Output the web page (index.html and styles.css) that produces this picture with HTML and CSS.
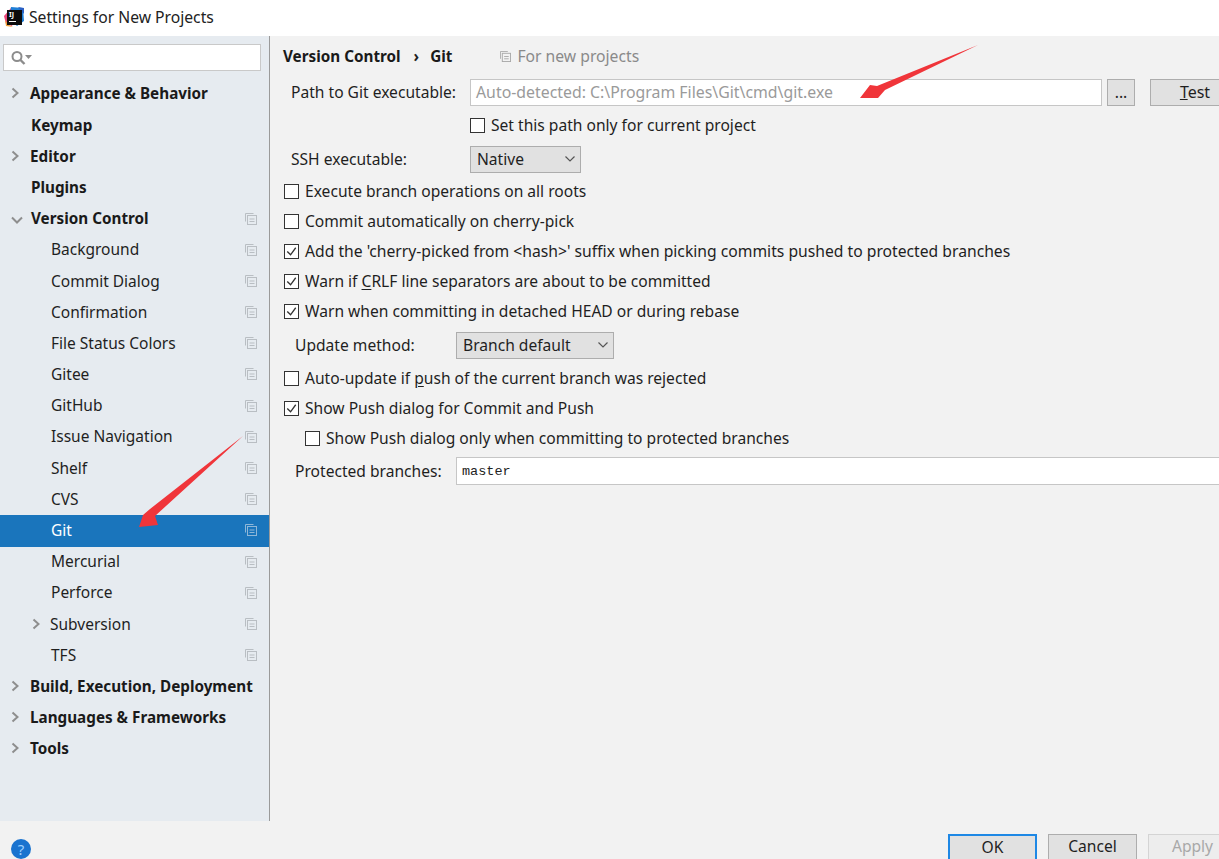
FILE: index.html
```html
<!DOCTYPE html>
<html lang="en">
<head>
<meta charset="utf-8">
<title>Settings for New Projects</title>
<link rel="stylesheet" href="styles.css">
</head>
<body>
<svg class="defs" width="0" height="0">
  <symbol id="copy" viewBox="0 0 12 12"><path d="M0.500 8.500V0.500H8.500" fill="none" stroke="currentColor"/><rect x="2.500" y="2.500" width="9" height="9" fill="none" stroke="currentColor"/><path d="M4.500 6h5M4.500 8.500h5" stroke="currentColor"/></symbol>
  <symbol id="right" viewBox="0 0 10 12"><path d="M2.500 1.500L7.500 6L2.500 10.500" fill="none" stroke="currentColor" stroke-width="2"/></symbol>
  <symbol id="down" viewBox="0 0 12 10"><path d="M1 2.500L6 7.500L11 2.500" fill="none" stroke="currentColor" stroke-width="2"/></symbol>
  <symbol id="caret" viewBox="0 0 12 8"><path d="M1.500 1.500L6 6L10.500 1.500" fill="none" stroke="currentColor" stroke-width="1.200"/></symbol>
  <symbol id="tick" viewBox="0 0 16 16"><path d="M3.500 8L7 11.500L12.500 4" fill="none" stroke="currentColor" stroke-width="1.400"/></symbol>
</svg>
<div class="window">
  <header class="titlebar">
    <svg class="logo" width="20" height="20" viewBox="0 0 20 20">
      <path d="M0 9L7 1L13 3L8 19L2 17Z" fill="#e9477c"/>
      <path d="M7 0L19 1L20 14L13 19L5 12Z" fill="#1f7fd6"/>
      <path d="M14 0L20 1L20 7Z" fill="#2b5fc4"/>
      <path d="M1 13L5 18L9 20L2 19Z" fill="#f2a23a"/>
      <rect x="3" y="3" width="15" height="15" fill="#0c0c0c"/>
      <text x="5" y="10" class="logo-text">IJ</text>
      <rect x="5" y="14" width="7" height="1" fill="#fff"/>
    </svg>
    <span class="title">Settings for New Projects</span>
  </header>
  <div class="body">
    <aside class="sidebar">
      <div class="search">
        <svg class="search-icon" width="24" height="16" viewBox="0 0 24 16"><circle cx="7" cy="6.500" r="4.500" fill="none" stroke="#8c8c8c" stroke-width="2"/><path d="M10.500 10L14.500 14" stroke="#8c8c8c" stroke-width="2.400"/><path d="M15 5h7l-3.500 4z" fill="#8c8c8c"/></svg>
      </div>
      <nav class="tree">
        <div class="row top"><svg class="arrow"><use href="#right"/></svg><span>Appearance &amp; Behavior</span></div>
        <div class="row top plain"><span>Keymap</span></div>
        <div class="row top"><svg class="arrow"><use href="#right"/></svg><span>Editor</span></div>
        <div class="row top plain"><span>Plugins</span></div>
        <div class="row top plain"><svg class="arrow-down"><use href="#down"/></svg><span>Version Control</span><svg class="copy"><use href="#copy"/></svg></div>
        <div class="row child"><span>Background</span><svg class="copy"><use href="#copy"/></svg></div>
        <div class="row child"><span>Commit Dialog</span><svg class="copy"><use href="#copy"/></svg></div>
        <div class="row child"><span>Confirmation</span><svg class="copy"><use href="#copy"/></svg></div>
        <div class="row child"><span>File Status Colors</span><svg class="copy"><use href="#copy"/></svg></div>
        <div class="row child"><span>Gitee</span><svg class="copy"><use href="#copy"/></svg></div>
        <div class="row child"><span>GitHub</span><svg class="copy"><use href="#copy"/></svg></div>
        <div class="row child"><span>Issue Navigation</span><svg class="copy"><use href="#copy"/></svg></div>
        <div class="row child"><span>Shelf</span><svg class="copy"><use href="#copy"/></svg></div>
        <div class="row child"><span>CVS</span><svg class="copy"><use href="#copy"/></svg></div>
        <div class="row child selected"><span>Git</span><svg class="copy"><use href="#copy"/></svg></div>
        <div class="row child"><span>Mercurial</span><svg class="copy"><use href="#copy"/></svg></div>
        <div class="row child"><span>Perforce</span><svg class="copy"><use href="#copy"/></svg></div>
        <div class="row child nested"><svg class="arrow"><use href="#right"/></svg><span>Subversion</span><svg class="copy"><use href="#copy"/></svg></div>
        <div class="row child"><span>TFS</span><svg class="copy"><use href="#copy"/></svg></div>
        <div class="row top"><svg class="arrow"><use href="#right"/></svg><span>Build, Execution, Deployment</span></div>
        <div class="row top"><svg class="arrow"><use href="#right"/></svg><span>Languages &amp; Frameworks</span></div>
        <div class="row top"><svg class="arrow"><use href="#right"/></svg><span>Tools</span></div>
      </nav>
    </aside>
    <main class="main">
      <div class="crumbs">
        <b>Version Control</b><span class="sep">›</span><b>Git</b>
        <span class="scope"><svg class="copy-small"><use href="#copy"/></svg>For new projects</span>
      </div>
      <div class="field f-path">
        <label class="lbl lbl-path">Path to Git executable:</label>
        <div class="input placeholder path-input">Auto-detected: C:\Program Files\Git\cmd\git.exe</div>
        <button class="btn dots">...</button>
        <button class="btn test"><u>T</u>est</button>
      </div>
      <div class="check only-path"><i class="box"></i>Set this path only for current project</div>
      <div class="field f-ssh">
        <label class="lbl lbl-ssh">SSH executable:</label>
        <div class="select native">Native<svg class="caret"><use href="#caret"/></svg></div>
      </div>
      <div class="check after-ssh"><i class="box"></i>Execute branch operations on all roots</div>
      <div class="check"><i class="box"></i>Commit automatically on cherry-pick</div>
      <div class="check wide"><i class="box"><svg class="tick"><use href="#tick"/></svg></i>Add the 'cherry-picked from &lt;hash&gt;' suffix when picking commits pushed to protected branches</div>
      <div class="check"><i class="box"><svg class="tick"><use href="#tick"/></svg></i><span>Warn if <u>C</u>RLF line separators are about to be committed</span></div>
      <div class="check"><i class="box"><svg class="tick"><use href="#tick"/></svg></i>Warn when committing in detached HEAD or during rebase</div>
      <div class="field f-update">
        <label class="lbl lbl-update">Update method:</label>
        <div class="select branch">Branch default<svg class="caret"><use href="#caret"/></svg></div>
      </div>
      <div class="check f-auto"><i class="box"></i><span>Auto-update if <u>p</u>ush of the current branch was rejected</span></div>
      <div class="check"><i class="box"><svg class="tick"><use href="#tick"/></svg></i>Show Push dialog for Commit and Push</div>
      <div class="check indented"><i class="box"></i>Show Push dialog only when committing to protected branches</div>
      <div class="field f-protected">
        <label class="lbl lbl-protected">Protected branches:</label>
        <div class="input mono">master</div>
      </div>
    </main>
  </div>
  <footer class="footer">
    <div class="help">?</div>
    <div class="actions">
      <button class="btn action ok">OK</button>
      <button class="btn action">Cancel</button>
      <button class="btn action disabled">Apply</button>
    </div>
  </footer>
  <svg class="annot" width="1219" height="859" viewBox="0 0 1219 859">
    <path d="M978 45L885 90L878 98L860 98L870 85L877 86Z" fill="#f0353a"/>
    <path d="M243 436L155 516L158 525L139 527L143 515L150 509Z" fill="#f0353a"/>
  </svg>
</div>
</body>
</html>
```
FILE: styles.css
```css
* { box-sizing: border-box; }
html, body { margin: 0; padding: 0; }
body {
  width: 1219px;
  height: 859px;
  overflow: hidden;
  font-family: "Noto Sans", "Open Sans", sans-serif;
  font-size: 15.6px;
  color: #1f1f1f;
  background: #f2f2f2;
}
.defs { position: absolute; }
.window { position: relative; width: 1219px; height: 859px; display: flex; flex-direction: column; overflow: hidden; }
.annot { position: absolute; left: 0; top: 0; pointer-events: none; }

.titlebar { height: 36px; flex: none; background: #fff; display: flex; align-items: center; padding: 0 0 2px 4px; }
.logo { flex: none; }
.logo-text { font-size: 7px; font-weight: 700; fill: #fff; }
.title { margin-left: 5px; font-size: 15.7px; color: #222; }

.body { flex: 1; min-height: 0; display: flex; }
.sidebar { width: 270px; flex: none; background: #e6ebf0; border-right: 1px solid #9a9a9a; padding: 8px 0 0 0; }
.search { margin-left: 3px; width: 258px; height: 27px; background: #fff; border: 1px solid #c9c9c9; display: flex; align-items: center; padding-left: 6px; }
.tree { margin-top: 7.8px; }
.row { height: 31.2px; display: flex; align-items: center; position: relative; white-space: nowrap; padding-bottom: 2px; font-size: 15.5px; }
.top { font-weight: 700; padding-left: 10px; color: #1a1a1a; font-size: 15.25px; }
.top.plain { padding-left: 31px; }
.top.plain .arrow-down { position: absolute; left: 11px; top: 11px; width: 12px; height: 10px; color: #8e8e8e; }
.arrow { width: 10px; height: 12px; color: #8e8e8e; margin-right: 10px; flex: none; }
.child { padding-left: 51px; font-weight: 400; }
.child.nested { padding-left: 31px; }
.child.nested .arrow { margin-right: 9px; }
.selected { background: #1a75bc; color: #fff; }
.copy { position: absolute; left: 245px; top: 9px; width: 12px; height: 12px; color: #b9bec3; }
.selected .copy { color: #8fb7d8; }

.main { flex: 1; min-width: 0; padding-left: 13px; padding-top: 5px; }
.crumbs { height: 30px; display: flex; align-items: center; font-size: 15.25px; }
.crumbs b { font-weight: 700; color: #1a1a1a; }
.sep { margin: 0 11px 0 13px; font-weight: 700; }
.scope { margin-left: 48px; color: #8a8a8a; display: flex; align-items: center; font-size: 15.7px; }
.copy-small { width: 11px; height: 11px; margin-right: 6px; color: #a8a8a8; }

.field { display: flex; align-items: center; position: relative; }
.f-path { height: 30px; margin-top: 6px; }
.f-ssh { height: 30px; margin-top: 4px; }
.f-update { height: 30px; margin-top: 4px; }
.f-protected { height: 30px; margin-top: 3px; }
.lbl { white-space: nowrap; }
.lbl-path, .lbl-ssh { margin-left: 8px; width: 179px; flex: none; }
.lbl-update, .lbl-protected { margin-left: 12px; width: 161px; flex: none; }
.input { height: 27px; background: #fff; border: 1px solid #c6c6c6; display: flex; align-items: center; padding-left: 5px; }
.placeholder { color: #9a9a9a; font-size: 15.85px; }
.path-input { width: 632px; flex: none; }
.mono { font-family: "Liberation Mono", monospace; font-size: 13.5px; width: 800px; flex: none; height: 28px; color: #222; }
.btn { font: inherit; color: #1f1f1f; background: #e1e1e1; border: 1px solid #adadad; padding: 0; height: 27px; }
.dots { width: 28px; margin-left: 5px; flex: none; }
.test { width: 90px; margin-left: 15px; flex: none; text-align: center; font-size: 16px; }
.select { height: 27px; background: #e1e1e1; border: 1px solid #adadad; display: flex; align-items: center; padding-left: 6px; position: relative; flex: none; }
.native { width: 111px; }
.branch { width: 158px; }
.caret { position: absolute; right: 4px; top: 8px; width: 12px; height: 8px; color: #555; }

.check { height: 30px; display: flex; align-items: center; white-space: nowrap; padding-left: 1px; }
.check u { text-underline-offset: 2px; }
.wide { font-size: 15.7px; }
.box { width: 15px; height: 15px; flex: none; margin-right: 6px; background: #fff; border: 1px solid #333; position: relative; font-style: normal; }
.tick { position: absolute; left: -1px; top: -1px; width: 15px; height: 15px; color: #333; }
.only-path { margin-left: 186px; margin-top: 3px; }
.after-ssh { margin-top: 2px; }
.f-auto { margin-top: 3px; }
.indented { margin-left: 21px; }

.footer { height: 38px; flex: none; display: flex; justify-content: space-between; padding-top: 13px; background: #f2f2f2; position: relative; }
.help { position: absolute; left: 11px; top: 18px; width: 20px; height: 20px; border-radius: 50%; background: #1a73cf; color: #9fd0ff; font-size: 15px; line-height: 20px; text-align: center; }
.actions { display: flex; gap: 11px; margin-left: 948px; align-items: flex-start; }
.action { width: 89px; height: 30px; flex: none; padding-bottom: 6px; }
.ok { border: 2px solid #1e88e5; }
.disabled { color: #a8a8a8; background: #ededed; border-color: #d4d4d4; }
```
